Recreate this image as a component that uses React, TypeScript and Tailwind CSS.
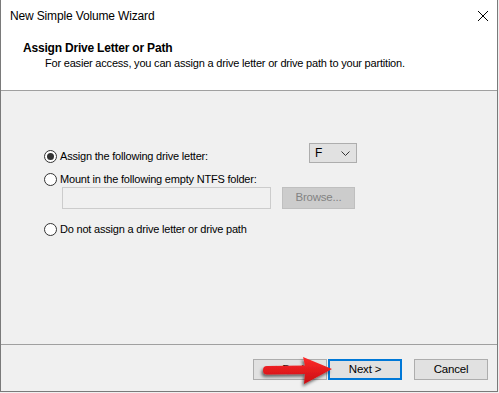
import React from 'react';

const Radio = ({ checked, label }: { checked?: boolean; label: string }) => (
  <label className="flex items-center h-[16px] gap-[3px] text-[#000000]">
    <span className="w-[13px] h-[13px] rounded-full border border-[#333333] bg-white flex items-center justify-center">
      {checked && <span className="w-[7px] h-[7px] rounded-full bg-[#333333]" />}
    </span>
    <span className="leading-[16px]">{label}</span>
  </label>
);

const Button = ({ children, focused }: { children: React.ReactNode; focused?: boolean }) => (
  <button
    className={`w-[74px] h-[21px] bg-[#e1e1e1] text-[11.5px] leading-none text-black flex items-center justify-center ${
      focused ? 'border-2 border-[#0078d7]' : 'border border-[#adadad]'
    }`}
  >
    {children}
  </button>
);

export default function App() {
  return (
    <div className="w-[499px] h-[393px] bg-[#f0f0f0] font-['Liberation_Sans',Arial,sans-serif] text-[11px] tracking-[-0.2px] text-black">
      <div className="relative w-[498px] h-[392px] border-x border-b border-[#7a7a7a] flex flex-col bg-[#f0f0f0]">
        {/* title bar */}
        <div className="h-[31px] bg-white flex items-center justify-between pl-[9px] pr-[9px] shrink-0">
          <span className="text-[12px] tracking-[-0.15px] leading-[16px]">New Simple Volume Wizard</span>
          <svg width="12" height="12" viewBox="0 0 12 12" className="mr-[-1px]">
            <path d="M1 1 L11 11 M11 1 L1 11" stroke="#000" strokeWidth="1" />
          </svg>
        </div>

        {/* header */}
        <div className="h-[60px] bg-white border-b border-[#a0a0a0] pl-[22px] pt-[9px] shrink-0">
          <div className="font-bold text-[12px] tracking-[-0.2px] leading-[16px]">Assign Drive Letter or Path</div>
          <div className="pl-[22px] leading-[14px]">
            For easier access, you can assign a drive letter or drive path to your partition.
          </div>
        </div>

        {/* body */}
        <div className="flex-1 pl-[43px] flex flex-col">
          <div className="w-[313px] h-[20px] mt-[52px] flex items-start justify-between">
            <div className="mt-[5px]">
              <Radio checked label="Assign the following drive letter:" />
            </div>
            <div className="w-[48px] h-[20px] bg-[#e1e1e1] border border-[#adadad] flex items-center justify-between pl-[5px] pr-[6px]">
              <span className="text-[12px] leading-none">F</span>
              <svg width="9" height="5" viewBox="0 0 9 5">
                <path d="M0.5 0.5 L4.5 4.5 L8.5 0.5" stroke="#333" strokeWidth="1" fill="none" />
              </svg>
            </div>
          </div>

          <div className="mt-[8px]">
            <Radio label="Mount in the following empty NTFS folder:" />
          </div>

          <div className="flex items-center gap-[11px] ml-[18px] h-[22px]">
            <div className="w-[209px] h-[22px] bg-[#f0f0f0] border border-[#cccccc]" />
            <button className="w-[73px] h-[22px] bg-[#cccccc] border border-[#bfbfbf] text-[11.5px] text-[#838383] leading-none flex items-center justify-center">
              Browse...
            </button>
          </div>

          <div className="mt-[12px]">
            <Radio label="Do not assign a drive letter or drive path" />
          </div>
        </div>

        {/* footer */}
        <div className="h-[47px] border-t border-[#a0a0a0] pt-[14px] pr-[9px] flex items-start justify-end shrink-0">
          <Button>&lt; Back</Button>
          <div className="ml-[1px]">
            <Button focused>Next &gt;</Button>
          </div>
          <div className="ml-[12px]">
            <Button>Cancel</Button>
          </div>
        </div>

        {/* red callout arrow */}
        <svg
          className="absolute left-[254px] top-[352px]"
          width="82"
          height="38"
          viewBox="0 0 82 38"
        >
          <defs>
            <linearGradient id="arrowRed" x1="0" y1="0" x2="0" y2="1">
              <stop offset="0" stopColor="#ff2a2a" />
              <stop offset="1" stopColor="#c80d12" />
            </linearGradient>
            <filter id="arrowShadow" x="-20%" y="-30%" width="140%" height="160%">
              <feDropShadow dx="-1.5" dy="2.5" stdDeviation="1.5" floodColor="#000" floodOpacity="0.55" />
            </filter>
          </defs>
          <g filter="url(#arrowShadow)">
            <path
              d="M12 14 L50 13.5 L48 5 L77 17 L49 32 L50 22 L12 22.5 Q8 22.5 8 18.2 Q8 14 12 14 Z"
              fill="url(#arrowRed)"
            />
          </g>
        </svg>
      </div>
    </div>
  );
}
